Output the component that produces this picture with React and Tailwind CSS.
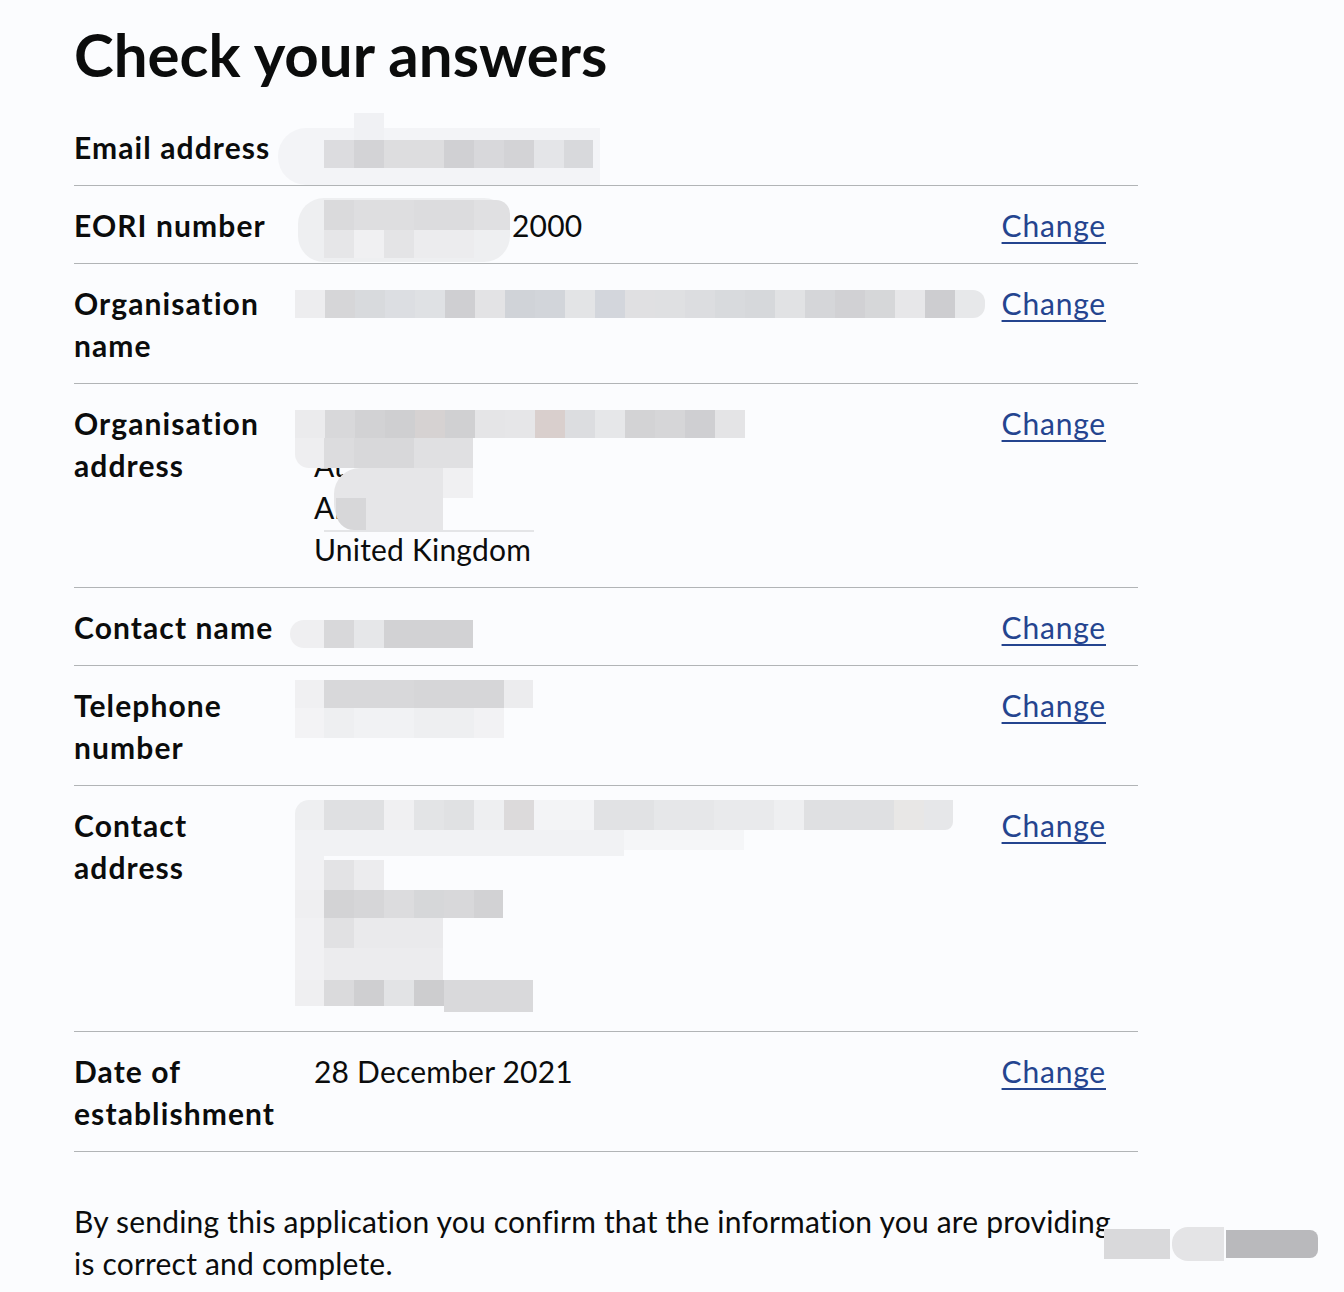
const C = (x, y, w, h, c, extra = '') => ({ x, y, w, h, c, extra })

// blurred cells, page x minus 74, y relative to row top
const mosaics = {
  email: [
    C(204, 20, 322, 57, '#f3f4f7', 'rounded-l-[28px]'),
    C(280, 5, 30, 27, '#f0f1f4'),
    C(250, 32, 30, 28, '#dcdcdf'),
    C(280, 32, 30, 28, '#d3d3d6'),
    C(310, 32, 60, 28, '#dddddf'),
    C(370, 32, 30, 28, '#d0d0d3'),
    C(400, 32, 30, 28, '#d8d8db'),
    C(430, 32, 30, 28, '#d3d3d6'),
    C(460, 32, 30, 28, '#e4e5e8'),
    C(490, 32, 29, 28, '#d8d9dc'),
  ],
  eori: [
    C(224, 12, 212, 64, '#eeeff1', 'rounded-[26px]'),
    C(250, 14, 30, 30, '#dadadc'),
    C(280, 14, 60, 30, '#dedee0'),
    C(340, 14, 60, 30, '#dcdcde'),
    C(400, 14, 36, 30, '#e0e0e2', 'rounded-tr-[14px]'),
    C(250, 44, 30, 28, '#e6e6e8'),
    C(280, 44, 30, 28, '#f0f0f2'),
    C(310, 44, 30, 28, '#e4e4e6'),
    C(340, 44, 60, 28, '#ececee'),
  ],
  orgName: ['#ededef', '#d6d6d8', '#d8dadd', '#dcdee2', '#dfe1e4', '#cfcfd2', '#e3e3e5', '#d0d3d8', '#d2d5da', '#e3e4e6', '#d3d6dc', '#e0e0e2', '#dfe0e2', '#dcdde0', '#d8dadd', '#d6d8db', '#e1e2e4', '#d5d6d9', '#d1d1d4', '#d6d7d9', '#e7e7e9', '#cdcdd0', '#e7e8ea'].map((c, i) =>
    C(221 + i * 30, 26, 30, 28, c, i === 22 ? 'rounded-r-[12px]' : '')
  ),
  orgAddress: [
    ...['#ebebed', '#d8d8da', '#d2d2d4', '#cfcfd1', '#d6d2d2', '#d0d0d2', '#e5e5e7', '#e6e6e8', '#d9cfcd', '#dcdde0', '#e6e7e9', '#d3d3d5', '#d6d6d8', '#cfcfd2', '#e4e4e6'].map((c, i) =>
      C(221 + i * 30, 26, 30, 28, c)
    ),
    C(221, 54, 30, 30, '#eeeef0', 'rounded-bl-[14px]'),
    C(250, 54, 30, 30, '#dcdcde'),
    C(280, 54, 60, 30, '#d8d8da'),
    C(340, 54, 59, 30, '#e0e0e2'),
    C(260, 84, 109, 62, '#e6e6e8', 'rounded-l-[26px]'),
    C(369, 84, 30, 30, '#f0f0f2'),
    C(262, 114, 30, 32, '#d7d7d9', 'rounded-bl-[18px]'),
    C(250, 146, 210, 2, '#e4e5e7'),
  ],
  contactName: [
    C(216, 32, 34, 28, '#efeff1', 'rounded-l-[14px]'),
    C(250, 32, 30, 28, '#d8d8da'),
    C(280, 32, 30, 28, '#e6e7e9'),
    C(310, 32, 89, 28, '#d2d2d4'),
  ],
  phone: [
    C(221, 14, 29, 28, '#f0f0f2'),
    C(250, 14, 90, 28, '#d8d8da'),
    C(340, 14, 90, 28, '#d6d6d8'),
    C(430, 14, 29, 28, '#ececee'),
    C(221, 42, 29, 30, '#f3f3f5'),
    C(250, 42, 30, 30, '#eeeff1'),
    C(280, 42, 60, 30, '#f1f2f4'),
    C(340, 42, 60, 30, '#eeeff1'),
    C(400, 42, 30, 30, '#f2f2f4'),
  ],
  contactAddress: [
    C(221, 14, 29, 30, '#eeeff1', 'rounded-tl-[14px]'),
    C(250, 14, 60, 30, '#dfe0e2'),
    C(310, 14, 30, 30, '#f0f0f2'),
    C(340, 14, 30, 30, '#e3e4e6'),
    C(370, 14, 30, 30, '#e0e1e3'),
    C(400, 14, 30, 30, '#eeeff1'),
    C(430, 14, 30, 30, '#dcdadb'),
    C(460, 14, 60, 30, '#f3f4f6'),
    C(520, 14, 60, 30, '#e1e2e4'),
    C(580, 14, 60, 30, '#e6e7e9'),
    C(640, 14, 60, 30, '#e9eaec'),
    C(700, 14, 30, 30, '#eeeff1'),
    C(730, 14, 90, 30, '#dfe0e2'),
    C(820, 14, 30, 30, '#e8e7e6'),
    C(850, 14, 29, 30, '#e6e7e9', 'rounded-br-[8px]'),
    C(221, 44, 29, 30, '#f1f2f4'),
    C(250, 44, 300, 26, '#f1f2f4'),
    C(550, 44, 120, 20, '#f5f6f8'),
    C(221, 74, 29, 30, '#f1f1f3'),
    C(250, 74, 30, 30, '#e3e3e5'),
    C(280, 74, 30, 30, '#ececee'),
    C(221, 104, 29, 28, '#efeff1'),
    C(250, 104, 30, 28, '#d3d3d5'),
    C(280, 104, 30, 28, '#d6d6d8'),
    C(310, 104, 30, 28, '#dcdcde'),
    C(340, 104, 30, 28, '#d6d7d9'),
    C(370, 104, 30, 28, '#d8d8da'),
    C(400, 104, 29, 28, '#d2d2d4'),
    C(221, 132, 29, 62, '#f1f1f3'),
    C(250, 132, 30, 30, '#e1e1e3'),
    C(280, 132, 89, 30, '#eaeaec'),
    C(250, 162, 119, 32, '#ececee'),
    C(221, 194, 29, 26, '#efeff1'),
    C(250, 194, 30, 26, '#dadadc'),
    C(280, 194, 30, 26, '#cfcfd1'),
    C(310, 194, 30, 26, '#e2e3e5'),
    C(340, 194, 30, 26, '#cdcdcf'),
    C(370, 194, 89, 32, '#d9d9db'),
  ],
}

function Mosaic({ cells }) {
  return (
    <div className="pointer-events-none absolute inset-0">
      {cells.map((r, i) => (
        <div
          key={i}
          className={`absolute ${r.extra}`}
          style={{ left: r.x, top: r.y, width: r.w, height: r.h, background: r.c }}
        />
      ))}
    </div>
  )
}

function Row({ label, children, change = true, blur }) {
  return (
    <div className="relative flex border-b border-[#b1b4b6] pt-[18px] pb-[17px]">
      <dt className="w-[240px] shrink-0 pr-[20px] font-bold tracking-[1.1px]">{label}</dt>
      <dd className="flex-1 font-normal tracking-[0.2px]">{children}</dd>
      <dd className="w-[160px] shrink-0 pr-[32px] text-right">
        {change && (
          <a href="#" className="tracking-[0.8px] text-[#24448f] underline decoration-[2px] underline-offset-[5px]">
            Change
          </a>
        )}
      </dd>
      {blur && <Mosaic cells={blur} />}
    </div>
  )
}

export default function App() {
  return (
    <div className="min-h-screen bg-[#fbfcfe] text-[#0b0c0c] font-['Lato','Liberation_Sans',sans-serif]">
      <div className="w-[1138px] pl-[74px]">
        <h1 className="h-[108px] pt-[22px] text-[60px] leading-[64px] font-bold">
          Check your answers
        </h1>
        <dl className="text-[30px] leading-[42px]">
          <Row label="Email address" change={false} blur={mosaics.email}>
            &nbsp;
          </Row>
          <Row label="EORI number" blur={mosaics.eori}>
            <span className="pl-[198px]">2000</span>
          </Row>
          <Row label="Organisation name" blur={mosaics.orgName}>
            &nbsp;
          </Row>
          <Row label="Organisation address" blur={mosaics.orgAddress}>
            <div>&nbsp;</div>
            <div>At</div>
            <div>Ab</div>
            <div>United Kingdom</div>
          </Row>
          <Row label="Contact name" blur={mosaics.contactName}>
            &nbsp;
          </Row>
          <Row label="Telephone number" blur={mosaics.phone}>
            &nbsp;
          </Row>
          <Row label="Contact address" blur={mosaics.contactAddress}>
            <div>&nbsp;</div>
            <div>&nbsp;</div>
            <div>&nbsp;</div>
            <div>&nbsp;</div>
            <div>&nbsp;</div>
          </Row>
          <Row label="Date of establishment">28 December 2021</Row>
        </dl>
        <p className="mt-[48px] text-[30px] leading-[42px] tracking-[0.2px]">
          By sending this application you confirm that the information you are providing is correct and complete.
        </p>
      </div>
      <div className="pointer-events-none absolute left-[1104px] top-[1226px] flex h-[36px] items-center gap-[2px]">
        <div className="h-[30px] w-[66px] bg-[#d9d9db]" />
        <div className="h-[34px] w-[52px] rounded-l-[16px] bg-[#e4e4e6]" />
        <div className="h-[28px] w-[92px] rounded-r-[8px] bg-[#b9b9bc]" />
      </div>
    </div>
  )
}
